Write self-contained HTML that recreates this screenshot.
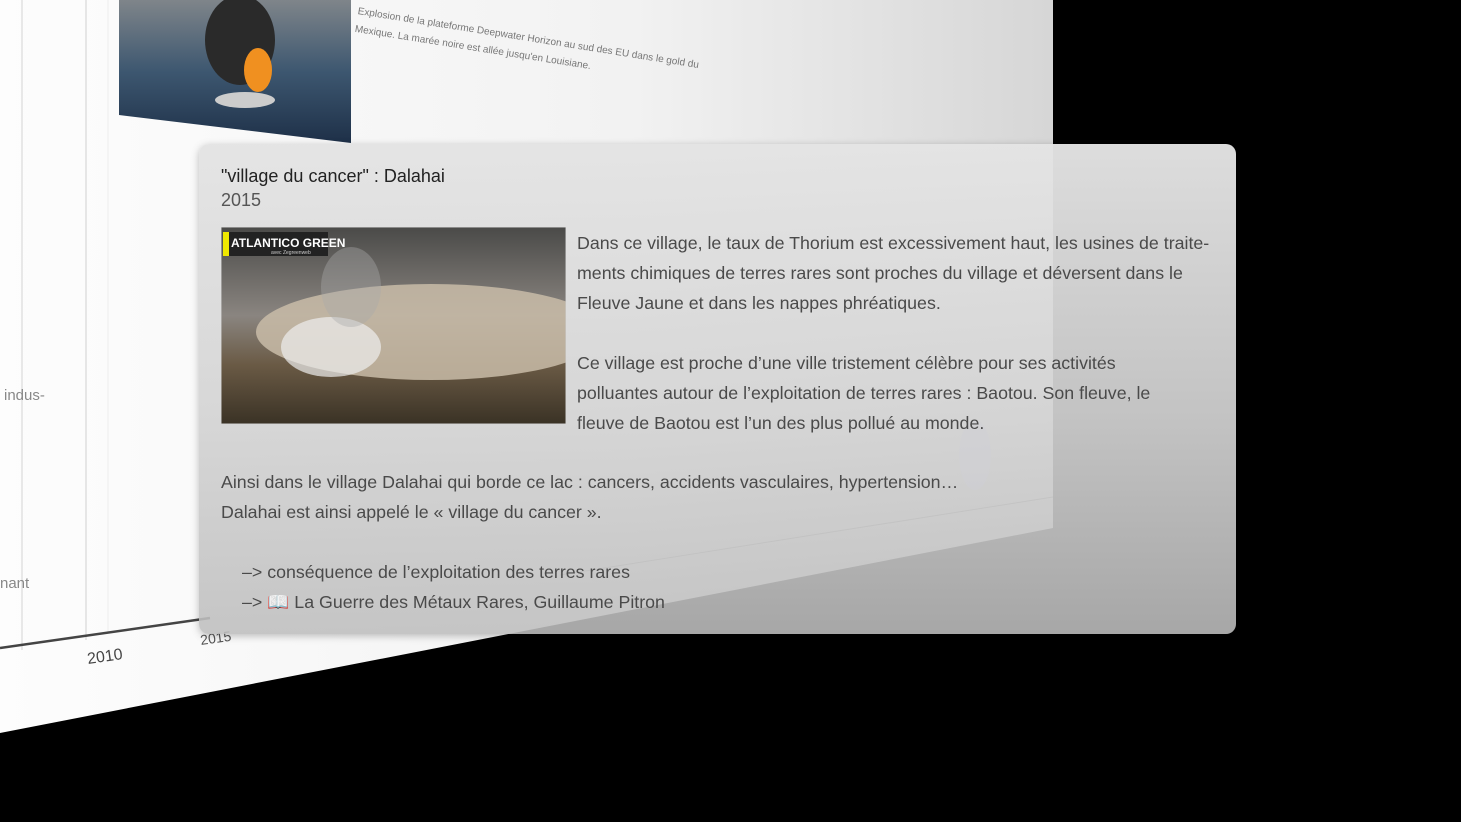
<!DOCTYPE html>
<html><head><meta charset="utf-8"><style>
body{margin:0;width:1461px;height:822px;background:#000;overflow:hidden;position:relative;font-family:"Liberation Sans",sans-serif}
.abs{position:absolute}
.card{left:199px;top:144px;width:1037px;height:490px;border-radius:10px;background:linear-gradient(rgba(228,228,228,0.97),rgba(212,212,212,0.92) 55%,rgba(190,190,190,0.88));box-shadow:0 2px 8px rgba(0,0,0,0.25)}
.t{color:#4a4a4a;font-size:17.8px;line-height:30px;white-space:nowrap}
</style></head><body>
<svg class="abs" style="left:0;top:0" width="1461" height="822">
<defs><linearGradient id="pg" x1="0" x2="1" y1="0" y2="0"><stop offset="0" stop-color="#fdfdfd"/><stop offset="0.6" stop-color="#f2f2f2"/><stop offset="1" stop-color="#d6d6d6"/></linearGradient>
<linearGradient id="img1" x1="0" y1="0" x2="0" y2="1"><stop offset="0" stop-color="#7f858a"/><stop offset="0.5" stop-color="#3d5770"/><stop offset="1" stop-color="#1e3048"/></linearGradient></defs>
<polygon points="0,0 1053,0 1053,528 0,733" fill="url(#pg)"/>
<line x1="22" y1="0" x2="22" y2="650" stroke="#e8e8e8" stroke-width="2"/>
<line x1="86" y1="0" x2="86" y2="640" stroke="#e6e6e6" stroke-width="2"/>
<line x1="108" y1="0" x2="108" y2="632" stroke="#ececec" stroke-width="1"/>
<line x1="0" y1="648" x2="210" y2="618" stroke="#444" stroke-width="2.5"/>
<text x="88" y="664" font-size="16" fill="#444" transform="rotate(-8 88 664)">2010</text>
<text x="201" y="645" font-size="14" fill="#555" transform="rotate(-8 201 645)">2015</text>
<text x="4" y="400" font-size="15" fill="#888">indus-</text>
<text x="0" y="588" font-size="15" fill="#888">nant</text>
<polygon points="119,0 351,0 351,143 119,115" fill="url(#img1)"/>
<ellipse cx="240" cy="40" rx="35" ry="45" fill="#2a2a2a"/>
<ellipse cx="258" cy="70" rx="14" ry="22" fill="#f09020"/>
<ellipse cx="245" cy="100" rx="30" ry="8" fill="#ccc"/>
<g transform="rotate(9 358 10)" fill="#777" font-size="10"><text x="358" y="14">Explosion de la plateforme Deepwater Horizon au sud des EU dans le gold du</text><text x="358" y="32">Mexique. La marée noire est allée jusqu'en Louisiane.</text></g>
</svg>
<div class="abs card"></div>
<svg class="abs" style="left:0;top:0" width="1461" height="822">
<line x1="560" y1="575" x2="1053" y2="497" stroke="#bbb" stroke-width="1" opacity="0.5"/>
<ellipse cx="975" cy="455" rx="16" ry="35" fill="#cfcfd8" opacity="0.4"/>
</svg>
<div class="abs" style="left:221px;top:166px;font-size:18px;color:#222">"village du cancer" : Dalahai</div>
<div class="abs" style="left:221px;top:190px;font-size:18px;color:#555">2015</div>
<svg class="abs" style="left:221px;top:227px" width="345" height="197">
<defs><linearGradient id="g2" x1="0" y1="0" x2="0" y2="1"><stop offset="0" stop-color="#4a4a48"/><stop offset="0.45" stop-color="#8a8580"/><stop offset="0.7" stop-color="#6a5a45"/><stop offset="1" stop-color="#3a3225"/></linearGradient></defs>
<rect width="345" height="197" fill="url(#g2)"/>
<ellipse cx="210" cy="105" rx="175" ry="48" fill="#c9bca8" opacity="0.85"/>
<ellipse cx="110" cy="120" rx="50" ry="30" fill="#eee" opacity="0.7"/>
<ellipse cx="130" cy="60" rx="30" ry="40" fill="#aaa" opacity="0.4"/>
<rect y="0" width="345" height="197" fill="none" stroke="#ccc"/>
<rect x="2" y="5" width="105" height="24" fill="#222"/>
<rect x="2" y="5" width="6" height="24" fill="#f0e800"/>
<text x="10" y="20" fill="#fff" font-size="12" font-weight="bold">ATLANTICO GREEN</text>
<text x="50" y="27" fill="#ccc" font-size="5">avec Zegreenweb</text>
</svg>
<div class="abs t" style="left:577px;top:228px">Dans ce village, le taux de Thorium est excessivement haut, les usines de traite-<br>ments chimiques de terres rares sont proches du village et déversent dans le<br>Fleuve Jaune et dans les nappes phréatiques.<br><br>Ce village est proche d’une ville tristement célèbre pour ses activités<br>polluantes autour de l’exploitation de terres rares : Baotou. Son fleuve, le<br>fleuve de Baotou est l’un des plus pollué au monde.</div>
<div class="abs t" style="left:221px;top:467px">Ainsi dans le village Dalahai qui borde ce lac : cancers, accidents vasculaires, hypertension…<br>Dalahai est ainsi appelé le « village du cancer ».</div>
<div class="abs t" style="left:242px;top:557px">–&gt; conséquence de l’exploitation des terres rares<br>–&gt; <span style="color:#3a6fb0">📖</span> La Guerre des Métaux Rares, Guillaume Pitron</div>
</body></html>
